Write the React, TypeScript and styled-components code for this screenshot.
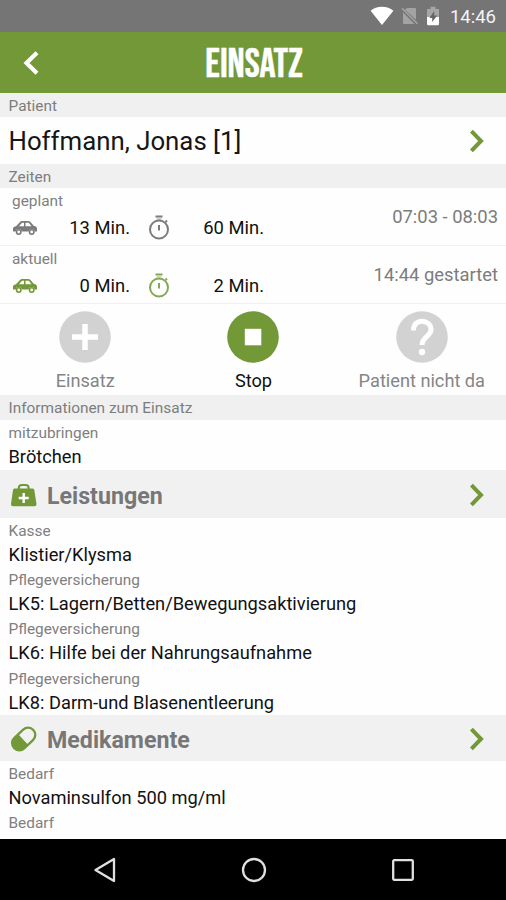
import React from 'react';
import styled, { createGlobalStyle } from 'styled-components';

const green = '#739838';

const GlobalStyle = createGlobalStyle`
  * { box-sizing: border-box; }
  body { margin: 0; background: #fdfdfd; font-family: Roboto, "Liberation Sans", sans-serif; color: #111; }
  svg { display: block; flex: none; }
`;

const Screen = styled.div`
  width: 506px;
  height: 900px;
  display: flex;
  flex-direction: column;
  overflow: hidden;
  background: #fefefe;
`;

const StatusBar = styled.div`
  flex: none;
  height: 32px;
  background: #757575;
  display: flex;
  align-items: center;
  justify-content: flex-end;
  padding-right: 10px;
`;

const StatusIcons = styled.div`
  display: flex;
  align-items: center;
  gap: 7px;
`;

const Clock = styled.span`
  margin-left: 10px;
  padding-top: 1px;
  font-size: 18.5px;
  line-height: 22px;
  color: #f4f4f4;
`;

const Header = styled.header`
  flex: none;
  height: 62px;
  background: ${green};
  border-bottom: 1px solid #f4f8ec;
  display: grid;
  grid-template-columns: 60px 1fr 60px;
  align-items: center;
`;

const BackButton = styled.div`
  padding-left: 23px;
`;

const Title = styled.h1`
  margin: 0;
  padding: 4px 0 0 2px;
  text-align: center;
  font: 400 40px/48px "Bebas Neue", "Roboto Condensed", Roboto, sans-serif;
  -webkit-text-stroke: 0.5px #fff;
  color: #fff;
`;

const SectionBar = styled.div<{ $height: number }>`
  flex: none;
  height: ${p => p.$height}px;
  padding: 1px 8px 0 8.5px;
  background: #f0f0f0;
  display: flex;
  align-items: center;
  font-size: 15.4px;
  line-height: 20px;
  color: #7d7d7d;
`;

const PatientRow = styled.div`
  flex: none;
  height: 47px;
  display: flex;
  align-items: center;
  justify-content: space-between;
  padding: 0 21px 0 8.5px;
`;

const PatientName = styled.span`
  font-size: 25.8px;
  line-height: 32px;
  color: #161616;
`;

const TimeRow = styled.div`
  flex: none;
  height: 58px;
  display: grid;
  grid-template-columns: 1fr auto;
  align-items: center;
  padding: 0 8px 0 12px;
  border-bottom: 1px solid #f1f1f1;
`;

const TimeBlock = styled.div`
  height: 58px;
  padding-top: 3px;
`;

const Caption = styled.div`
  font-size: 15.4px;
  line-height: 20px;
  color: #808080;
`;

const Durations = styled.div`
  display: grid;
  grid-template-columns: 28px 90px 18px 24px 92px;
  align-items: center;
  height: 33px;
`;

const Duration = styled.span<{ $wide?: boolean }>`
  font-size: 18.4px;
  line-height: 22px;
  text-align: right;
  grid-column: ${p => (p.$wide ? 5 : 2)};
`;

const WatchCell = styled.div`
  grid-column: 4;
`;

const TimeNote = styled.div`
  font-size: 18.4px;
  line-height: 22px;
  color: #7c7c7c;
`;

const Actions = styled.div`
  flex: none;
  height: 91px;
  display: grid;
  grid-template-columns: repeat(3, 1fr);
  padding: 7px 0 0 1px;
`;

const Action = styled.div<{ $active?: boolean }>`
  display: flex;
  flex-direction: column;
  align-items: center;
  gap: 7px;
  font-size: 18.2px;
  line-height: 22px;
  color: ${p => (p.$active ? '#111' : '#858585')};
`;

const List = styled.div`
  flex: none;
  padding: 3px 8px 0 8.5px;
`;

const InfoList = styled(List)`height: 50px;`;
const ServiceList = styled(List)`height: 197px;`;
const MedicineList = styled(List)`
  height: 78px;
  overflow: hidden;
`;

const Value = styled.div`
  height: 29.2px;
  font-size: 18.25px;
  line-height: 27px;
  white-space: nowrap;
`;

const GroupBar = styled.div<{ $height: number }>`
  flex: none;
  height: ${p => p.$height}px;
  background: #f1f1f1;
  display: grid;
  grid-template-columns: 38px 1fr auto;
  align-items: center;
  padding: 1px 21px 0 9px;
`;

const GroupTitle = styled.h2`
  margin: 0;
  padding-top: 2px;
  font-size: 23.2px;
  line-height: 28px;
  font-weight: 700;
  color: #777;
`;

const NavBar = styled.nav`
  flex: none;
  height: 61px;
  background: #000;
  display: grid;
  grid-template-columns: 149px 149px 150px;
  padding-left: 30px;
  justify-items: center;
  align-items: center;
`;

const Chevron = () => (
  <svg width="16" height="24" viewBox="0 0 16 24" fill="none" stroke={green} strokeWidth="4">
    <path d="M2.4 2.2 12 12 2.4 21.8" />
  </svg>
);

const Car = ({ color }: { color: string }) => (
  <svg width="26" height="16" viewBox="0 0 26 16">
    <path fill={color} fillRule="evenodd" d="M1 8.2Q1 6.7 4 6.2L8 2Q8.6 1 10 1h6.2q1.4 0 2.3 1l3.2 3.7q3.3.6 3.3 3.2v2.6h-2.2a3.2 3.2 0 0 0-6.2 0H9.8a3.2 3.2 0 0 0-6.2 0H1zM7 6.2h5V2.7h-2zM13.5 6.2h6l-2.7-3.5h-3.3z" />
    <circle cx="6.7" cy="12" r="2.2" fill="none" stroke={color} strokeWidth="1.6" />
    <circle cx="19.7" cy="12" r="2.2" fill="none" stroke={color} strokeWidth="1.6" />
  </svg>
);

const Stopwatch = ({ color }: { color: string }) => (
  <svg width="22" height="26" viewBox="0 0 22 26" fill="none" stroke={color} strokeWidth="2">
    <circle cx="11" cy="14.5" r="9" />
    <path d="M7.5 1.5h7M11 10v5.500M17.500 7l1.500-1.500" />
    <path d="M8.500 4h5" strokeWidth="1.2" opacity=".6" />
  </svg>
);

const WifiIcon = () => (
  <svg width="24" height="20" viewBox="0 0 24 20">
    <path fill="#fff" d="M.6 4.8Q5.2.7 12 .7t11.400 4.100L12 19z" />
  </svg>
);

const NoSimIcon = () => (
  <svg width="18" height="18" viewBox="0 0 18 18">
    <path fill="#a3a3a3" d="M6 1h8q1 0 1 1v10.800L4 2.700zM2 5.200 13.500 17H3q-1 0-1-1z" />
    <path d="M1 1.200 16.500 16.800" stroke="#a3a3a3" strokeWidth="1.600" />
  </svg>
);

const BatteryIcon = () => (
  <svg width="14" height="20" viewBox="0 0 14 20">
    <path fill="#a6a6a6" d="M1 3h3.500V.8h5V3H13v9H1z" />
    <path fill="#fff" d="M1 11h12v7q0 1.200-1.200 1.200H2.200Q1 19.200 1 18z" />
    <path fill="#666" d="M8.200 5 3.500 12h2.700v4l5-6.500H8.200z" />
  </svg>
);

const BackIcon = () => (
  <svg width="18" height="24" viewBox="0 0 18 24" fill="none" stroke="#fff" strokeWidth="4.200">
    <path d="M14 1.800 3.500 12 14 22.200" />
  </svg>
);

const PlusCircle = () => (
  <svg width="52" height="52" viewBox="0 0 52 52">
    <circle cx="26" cy="26" r="25.800" fill="#d2d2d2" />
    <path d="M26 13v26M13 26h26" stroke="#fff" strokeWidth="5.500" />
  </svg>
);

const StopCircle = () => (
  <svg width="52" height="52" viewBox="0 0 52 52">
    <circle cx="26" cy="26" r="25.800" fill={green} />
    <path d="M17.800 17.800h16.500v16.500H17.800z" fill="#fff" />
  </svg>
);

const QuestionCircle = () => (
  <svg width="52" height="52" viewBox="0 0 52 52">
    <circle cx="26" cy="26" r="25.800" fill="#d2d2d2" />
    <path d="M17.500 19.500C17.500 13 21.500 10.200 26 10.200s9 3 9 8.300c0 6.500-9 7.500-9 15.500" fill="none" stroke="#fff" strokeWidth="5" />
    <circle cx="26" cy="41" r="3.200" fill="#fff" />
  </svg>
);

const MedicalBag = () => (
  <svg width="30" height="28" viewBox="0 0 30 28">
    <path d="M9.800 9V7Q9.800 4 12.800 4h3.800Q19.600 4 19.600 7v2" fill="none" stroke={green} strokeWidth="2.100" />
    <path d="M5.500 7.500h18.200q1.400 0 1.600 1.500l2.200 14q.2 2.300-2 2.300H4q-2.200 0-2-2.300L4 9Q4.200 7.500 5.500 7.500z" fill={green} />
    <path d="M14.700 12v10M9.700 17h10" stroke="#fff" strokeWidth="2.400" />
  </svg>
);

const Pill = () => (
  <svg width="30" height="28" viewBox="0 0 30 28">
    <g transform="rotate(-43 14.700 14)">
      <rect x="1.500" y="6.800" width="26.400" height="14.400" rx="7.200" fill="none" stroke={green} strokeWidth="2.300" />
      <path d="M8.500 6.500H14v15H8.500a7.500 7.500 0 0 1 0-15z" fill={green} />
    </g>
  </svg>
);

const BackNav = () => (
  <svg width="24" height="28" viewBox="0 0 24 28">
    <path d="M21 3v22L2.500 14z" fill="none" stroke="#e0e0e0" strokeWidth="2.300" strokeLinejoin="round" />
  </svg>
);

const HomeNav = () => (
  <svg width="28" height="28" viewBox="0 0 28 28">
    <circle cx="14" cy="14" r="11" fill="none" stroke="#e0e0e0" strokeWidth="2.300" />
  </svg>
);

const RecentNav = () => (
  <svg width="24" height="24" viewBox="0 0 24 24">
    <rect x="2.200" y="2.200" width="19.600" height="19.600" rx="1" fill="none" stroke="#e0e0e0" strokeWidth="2.300" />
  </svg>
);

interface TimesProps { caption: string; drive: string; care: string; note: string; color: string; watchColor: string }

const Times = ({ caption, drive, care, note, color, watchColor }: TimesProps) => (
  <TimeRow>
    <TimeBlock>
      <Caption>{caption}</Caption>
      <Durations>
        <Car color={color} />
        <Duration>{drive}</Duration>
        <WatchCell><Stopwatch color={watchColor} /></WatchCell>
        <Duration $wide>{care}</Duration>
      </Durations>
    </TimeBlock>
    <TimeNote>{note}</TimeNote>
  </TimeRow>
);

const Entry = ({ label, value }: { label: string; value?: string }) => (
  <>
    <Caption>{label}</Caption>
    {value && <Value>{value}</Value>}
  </>
);

export default function App() {
  return (
    <Screen>
      <GlobalStyle />
      <StatusBar>
        <StatusIcons><WifiIcon /><NoSimIcon /><BatteryIcon /></StatusIcons>
        <Clock>14:46</Clock>
      </StatusBar>
      <Header>
        <BackButton><BackIcon /></BackButton>
        <Title>EINSATZ</Title>
      </Header>
      <SectionBar $height={23}>Patient</SectionBar>
      <PatientRow>
        <PatientName>Hoffmann, Jonas [1]</PatientName>
        <Chevron />
      </PatientRow>
      <SectionBar $height={24}>Zeiten</SectionBar>
      <Times caption="geplant" drive="13 Min." care="60 Min." note="07:03 - 08:03" color="#7b7b7b" watchColor="#7b7b7b" />
      <Times caption="aktuell" drive="0 Min." care="2 Min." note="14:44 gestartet" color={green} watchColor="#86a751" />
      <Actions>
        <Action><PlusCircle />Einsatz</Action>
        <Action $active><StopCircle />Stop</Action>
        <Action><QuestionCircle />Patient nicht da</Action>
      </Actions>
      <SectionBar $height={25}>Informationen zum Einsatz</SectionBar>
      <InfoList>
        <Entry label="mitzubringen" value="Brötchen" />
      </InfoList>
      <GroupBar $height={48}>
        <MedicalBag />
        <GroupTitle>Leistungen</GroupTitle>
        <Chevron />
      </GroupBar>
      <ServiceList>
        <Entry label="Kasse" value="Klistier/Klysma" />
        <Entry label="Pflegeversicherung" value="LK5: Lagern/Betten/Bewegungsaktivierung" />
        <Entry label="Pflegeversicherung" value="LK6: Hilfe bei der Nahrungsaufnahme" />
        <Entry label="Pflegeversicherung" value="LK8: Darm-und Blasenentleerung" />
      </ServiceList>
      <GroupBar $height={46}>
        <Pill />
        <GroupTitle>Medikamente</GroupTitle>
        <Chevron />
      </GroupBar>
      <MedicineList>
        <Entry label="Bedarf" value="Novaminsulfon 500 mg/ml" />
        <Entry label="Bedarf" />
      </MedicineList>
      <NavBar><BackNav /><HomeNav /><RecentNav /></NavBar>
    </Screen>
  );
}
